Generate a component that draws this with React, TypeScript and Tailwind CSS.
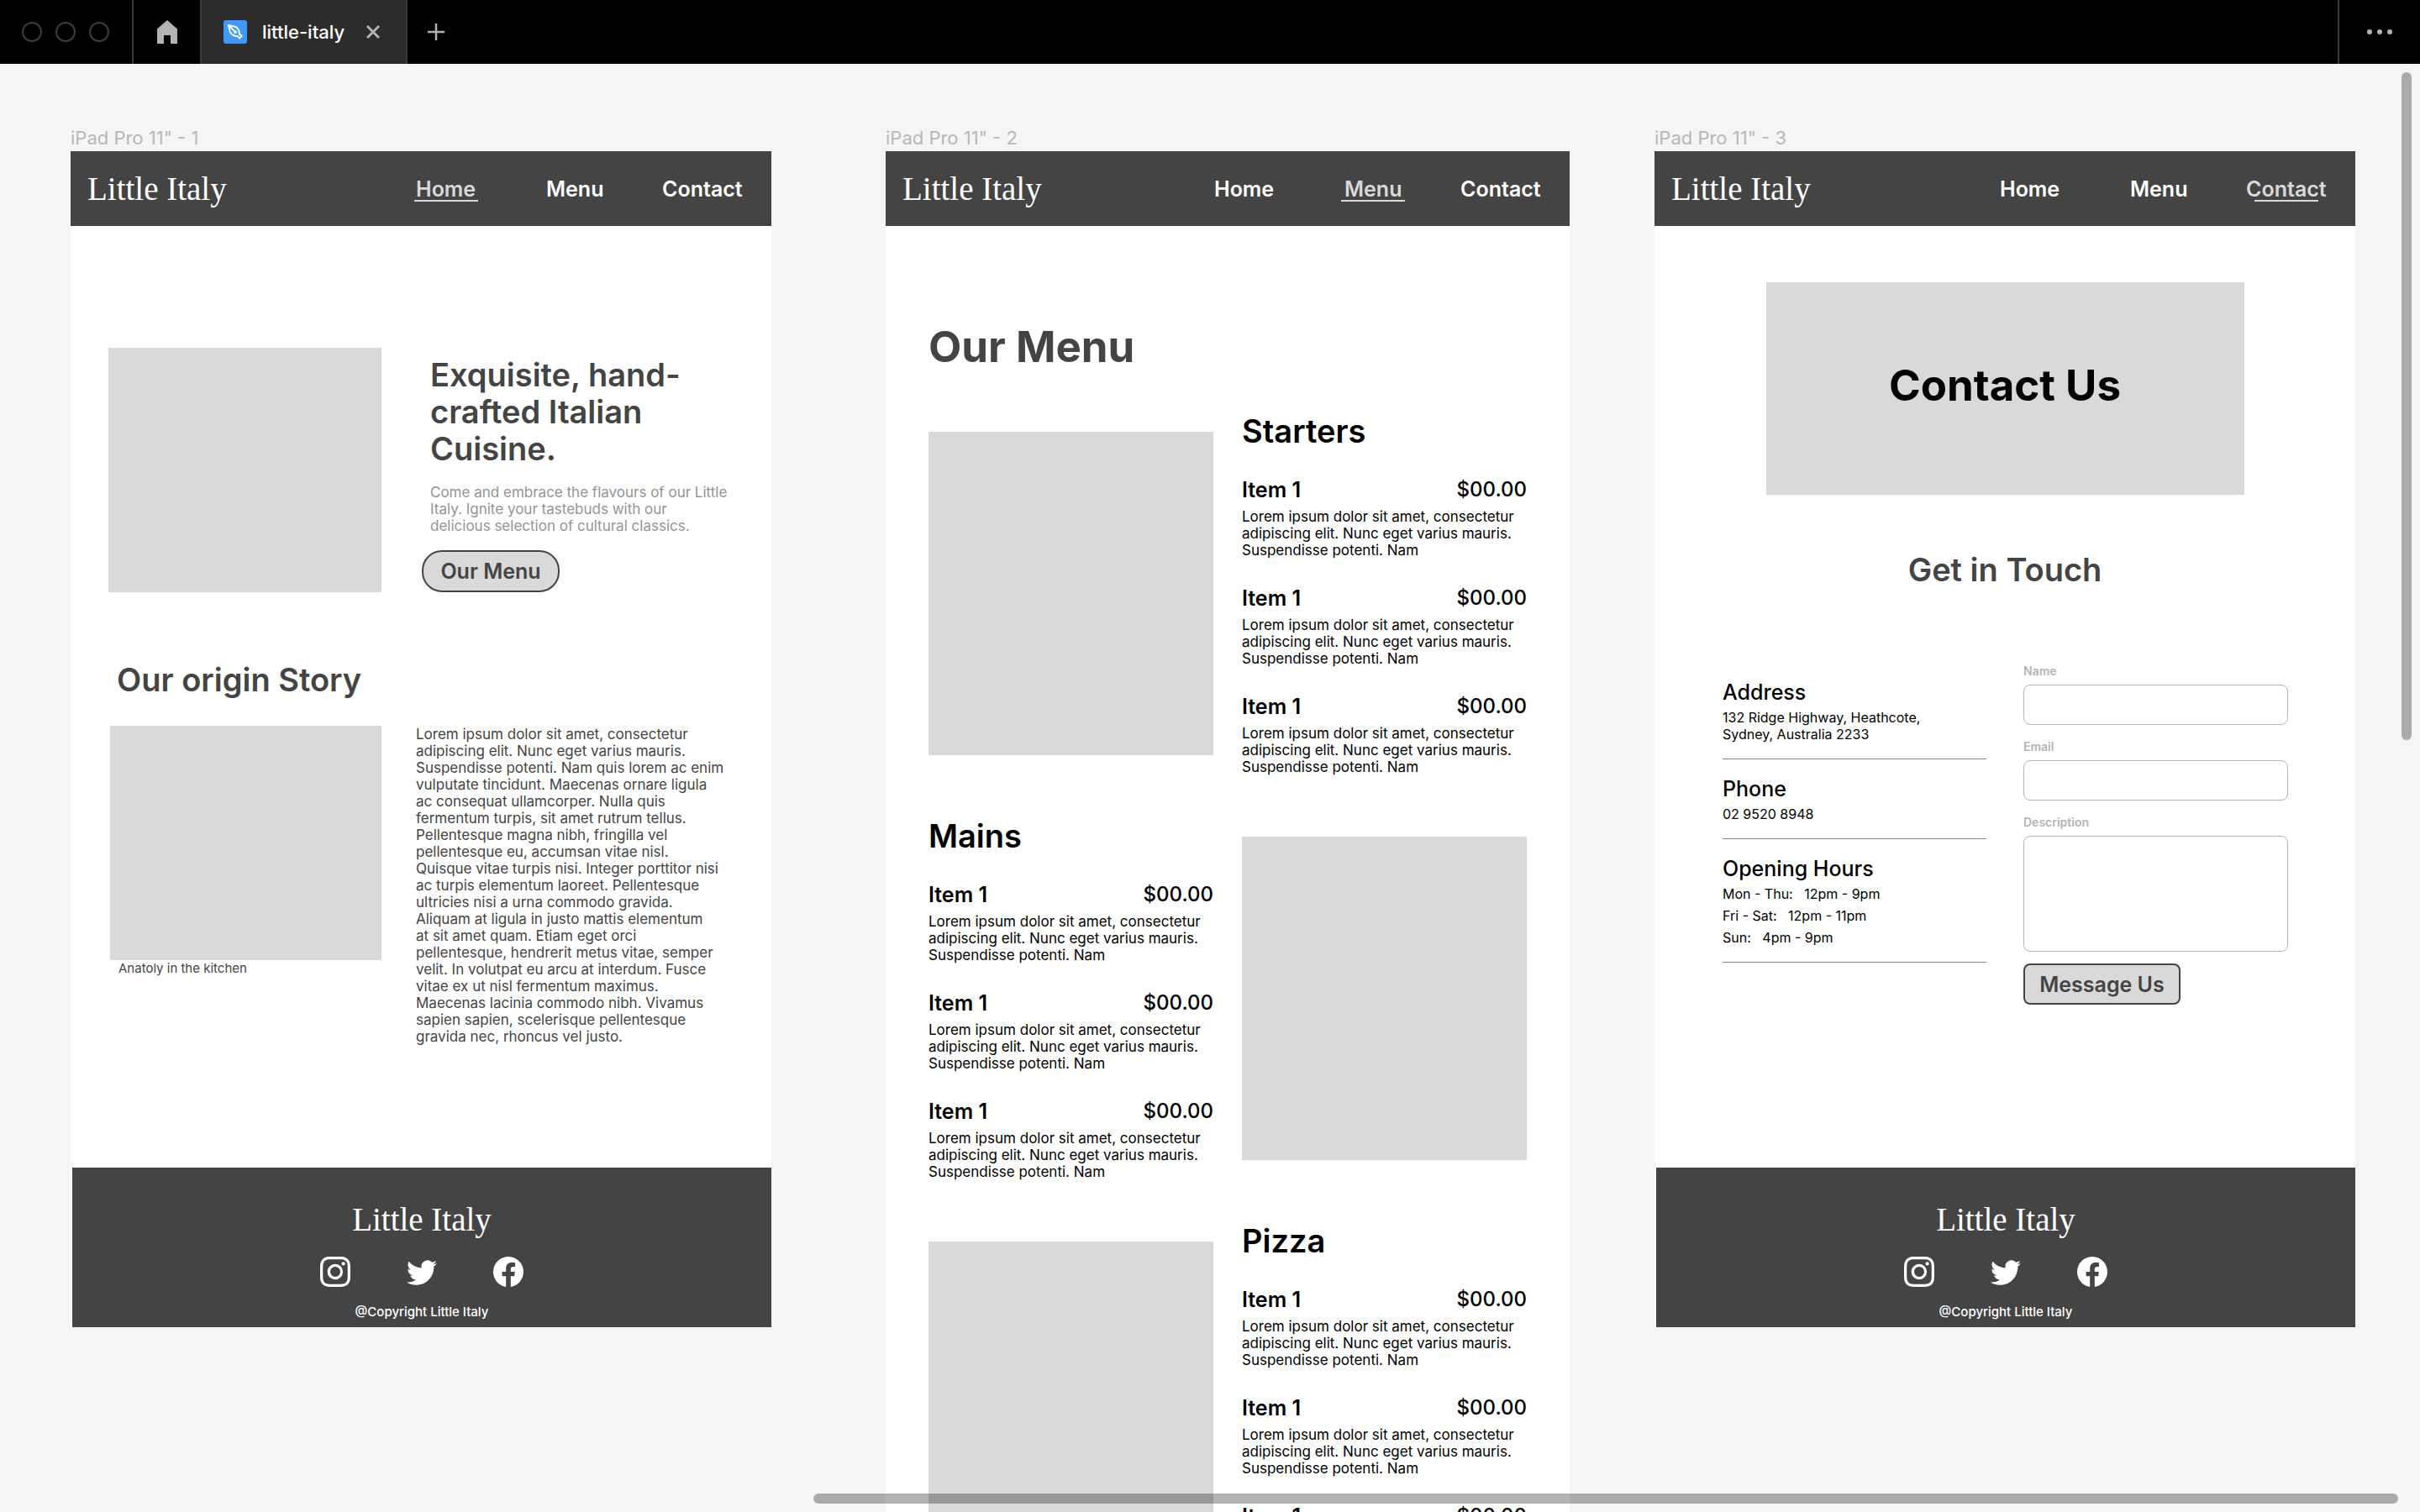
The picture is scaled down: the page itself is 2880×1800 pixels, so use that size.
import type { ReactNode } from "react";
import { BsFacebook, BsInstagram, BsTwitter } from "react-icons/bs";

type PageName = "Home" | "Menu" | "Contact";

const STORY = [
  "Lorem ipsum dolor sit amet, consectetur",
  "adipiscing elit. Nunc eget varius mauris.",
  "Suspendisse potenti. Nam quis lorem ac enim",
  "vulputate tincidunt. Maecenas ornare ligula",
  "ac consequat ullamcorper. Nulla quis",
  "fermentum turpis, sit amet rutrum tellus.",
  "Pellentesque magna nibh, fringilla vel",
  "pellentesque eu, accumsan vitae nisl.",
  "Quisque vitae turpis nisi. Integer porttitor nisi",
  "ac turpis elementum laoreet. Pellentesque",
  "ultricies nisi a urna commodo gravida.",
  "Aliquam at ligula in justo mattis elementum",
  "at sit amet quam. Etiam eget orci",
  "pellentesque, hendrerit metus vitae, semper",
  "velit. In volutpat eu arcu at interdum. Fusce",
  "vitae ex ut nisl fermentum maximus.",
  "Maecenas lacinia commodo nibh. Vivamus",
  "sapien sapien, scelerisque pellentesque",
  "gravida nec, rhoncus vel justo.",
];

const ITEM_TEXT = [
  "Lorem ipsum dolor sit amet, consectetur",
  "adipiscing elit. Nunc eget varius mauris.",
  "Suspendisse potenti. Nam",
];

function Lines({ lines }: { lines: string[] }) {
  return (
    <>
      {lines.map((line) => (
        <span key={line} className="block whitespace-nowrap">
          {line}
        </span>
      ))}
    </>
  );
}

function TopBar() {
  return (
    <header className="flex h-[76px] shrink-0 bg-black text-[#b3b3b3]">
      <div className="flex items-center gap-4 border-r-2 border-[#3a3a3a] pr-[27px] pl-[26px]">
        <span className="size-6 rounded-full border-2 border-[#3d3d3d]" />
        <span className="size-6 rounded-full border-2 border-[#3d3d3d]" />
        <span className="size-6 rounded-full border-2 border-[#3d3d3d]" />
      </div>
      <button aria-label="Home" className="flex w-[79px] items-center justify-center">
        <svg width="24" height="28" viewBox="0 0 24 28" fill="currentColor">
          <path d="M12 0 24 10.5V28h-8V18H8v10H0V10.5Z" />
        </svg>
      </button>
      <div className="flex items-center border-x-2 border-[#3a3a3a] bg-[#2c2c2c] pr-[30px] pl-[26px]">
        <svg width="28" height="28" viewBox="0 0 28 28" fill="none">
          <rect width="28" height="28" rx="3" fill="#4099f7" />
          <path
            d="M5.8 5.800 14.500 8C17.500 10 19 13 18.800 16.500L21.600 18.800 19 21.600 16.800 19C13.300 19.200 10 17.500 8 14.500ZM5.800 5.800 13 13"
            stroke="white"
            strokeWidth="1.900"
            strokeLinejoin="round"
          />
          <circle cx="14" cy="14" r="1.900" fill="white" />
        </svg>
        <span className="ml-[18px] text-[22px] leading-7 font-medium text-white">little-italy</span>
        <button aria-label="Close tab" className="ml-[25px]">
          <svg width="18" height="18" viewBox="0 0 18 18" stroke="currentColor" strokeWidth="3">
            <path d="m2 2 14 14M16 2 2 16" />
          </svg>
        </button>
      </div>
      <button aria-label="New tab" className="ml-6">
        <svg width="20" height="20" viewBox="0 0 20 20" stroke="currentColor" strokeWidth="2.500">
          <path d="M10 0v20M0 10h20" />
        </svg>
      </button>
      <button
        aria-label="More"
        className="ml-auto flex w-[98px] items-center justify-center gap-1.5 border-l-2 border-[#3a3a3a]"
      >
        <span className="size-1.5 rounded-full bg-[#b3b3b3]" />
        <span className="size-1.5 rounded-full bg-[#b3b3b3]" />
        <span className="size-1.5 rounded-full bg-[#b3b3b3]" />
      </button>
    </header>
  );
}

function Logo() {
  return <span className="font-['Liberation_Serif',serif] text-[39px] leading-[44px] text-white">Little Italy</span>;
}

function NavLink({ name, active }: { name: PageName; active: boolean }) {
  return (
    <a href="#" className={active ? "relative text-[#d9d9d9]" : "relative text-white"}>
      {name}
      {active && <span className="absolute top-7 left-1/2 h-0.5 w-[76px] -translate-x-1/2 bg-[#d9d9d9]" />}
    </a>
  );
}

function SiteHeader({ active }: { active: PageName }) {
  return (
    <div className="flex h-[89px] items-center justify-between bg-[#444] pr-8 pl-5">
      <Logo />
      <nav className="flex text-[25px] leading-[30px] font-semibold">
        <div className="w-[155px]">
          <NavLink name="Home" active={active === "Home"} />
        </div>
        <div className="w-[138px]">
          <NavLink name="Menu" active={active === "Menu"} />
        </div>
        <div className="w-[98px]">
          <NavLink name="Contact" active={active === "Contact"} />
        </div>
      </nav>
    </div>
  );
}

function SiteFooter() {
  return (
    <footer className="mt-auto ml-0.5 flex h-[190px] flex-col items-center bg-[#444] pt-10 text-white">
      <Logo />
      <div className="mt-[22px] flex gap-[67px]">
        <a href="#" aria-label="Instagram">
          <BsInstagram className="size-9" />
        </a>
        <a href="#" aria-label="Twitter">
          <BsTwitter className="size-9" />
        </a>
        <a href="#" aria-label="Facebook">
          <BsFacebook className="size-9" />
        </a>
      </div>
      <p className="mt-5 text-[15px] leading-5 font-medium">@Copyright Little Italy</p>
    </footer>
  );
}

function Artboard({
  label,
  className,
  children,
}: {
  label: string;
  className: string;
  children: ReactNode;
}) {
  return (
    <section className={className}>
      <h2 className="h-[30px] text-[22px] leading-7 whitespace-nowrap text-[#b8b8b8]">{label}</h2>
      {children}
    </section>
  );
}

function HomePage() {
  return (
    <div className="flex h-[1400px] flex-col bg-white text-[#444]">
      <SiteHeader active="Home" />
      <div className="mt-[145px] flex pl-[45px]">
        <div className="h-[291px] w-[325px] bg-[#d9d9d9]" />
        <div className="ml-12 pt-[10px]">
          <h1 className="pl-[10px] text-[38px] leading-[44px] font-semibold">
            <Lines lines={["Exquisite, hand-", "crafted Italian", "Cuisine."]} />
          </h1>
          <p className="mt-5 pl-[10px] text-[17px] leading-5 text-[#949494]">
            <Lines
              lines={[
                "Come and embrace the flavours of our Little",
                "Italy. Ignite your tastebuds with our",
                "delicious selection of cultural classics.",
              ]}
            />
          </p>
          <button className="mt-[19px] h-[50px] w-[164px] rounded-3xl border-2 border-[#444] bg-[#d9d9d9] text-[25px] leading-[30px] font-semibold">
            Our Menu
          </button>
        </div>
      </div>
      <h2 className="mt-[82px] pl-[55px] text-[38px] leading-[44px] font-semibold">Our origin Story</h2>
      <div className="mt-[33px] flex pl-[47px]">
        <figure>
          <div className="h-[279px] w-[323px] bg-[#d9d9d9]" />
          <figcaption className="pl-[10px] text-[15px] leading-5">Anatoly in the kitchen</figcaption>
        </figure>
        <p className="ml-[41px] text-[17px] leading-5">
          <Lines lines={STORY} />
        </p>
      </div>
      <SiteFooter />
    </div>
  );
}

function MenuSection({ title, imageFirst }: { title: string; imageFirst: boolean }) {
  return (
    <div className="grid grid-cols-2 gap-x-[34px]">
      <div className={imageFirst ? "mt-[23px] h-[385px] bg-[#d9d9d9]" : "order-last mt-[23px] h-[385px] bg-[#d9d9d9]"} />
      <div>
        <h3 className="text-[38px] leading-[44px] font-semibold">{title}</h3>
        <ul className="mt-[33px] flex flex-col gap-8">
          {[1, 2, 3].map((row) => (
            <li key={row}>
              <div className="flex justify-between leading-[30px]">
                <span className="text-[25px] font-semibold">Item 1</span>
                <span className="text-[24px] font-medium">$00.00</span>
              </div>
              <p className="mt-[7px] text-[17px] leading-5">
                <Lines lines={ITEM_TEXT} />
              </p>
            </li>
          ))}
        </ul>
      </div>
    </div>
  );
}

function MenuPage() {
  return (
    <div className="bg-white pb-24 text-black">
      <SiteHeader active="Menu" />
      <div className="px-[51px]">
        <h1 className="mt-[115px] text-[51px] leading-[58px] font-bold text-[#444]">Our Menu</h1>
        <div className="mt-[49px] flex flex-col gap-[50px]">
          <MenuSection title="Starters" imageFirst />
          <MenuSection title="Mains" imageFirst={false} />
          <MenuSection title="Pizza" imageFirst />
        </div>
      </div>
    </div>
  );
}

function Detail({ title, children }: { title: string; children: ReactNode }) {
  return (
    <div className="border-b border-[#858585] pb-[19px]">
      <h3 className="text-[25px] leading-[30px] font-medium">{title}</h3>
      <div className="mt-[5px] text-[16px] leading-5">{children}</div>
    </div>
  );
}

function ContactPage() {
  return (
    <div className="flex h-[1400px] flex-col bg-white text-black">
      <SiteHeader active="Contact" />
      <div className="mx-auto mt-[67px] flex h-[253px] w-[569px] items-center justify-center bg-[#d9d9d9] pb-2">
        <h1 className="text-[51px] leading-[58px] font-bold">Contact Us</h1>
      </div>
      <h2 className="mt-[67px] text-center text-[38px] leading-[44px] font-semibold text-[#444]">Get in Touch</h2>
      <div className="mt-[91px] grid grid-cols-[314px_315px] gap-x-11 pl-[81px]">
        <div className="mt-[18px] flex flex-col gap-5">
          <Detail title="Address">
            <Lines lines={["132 Ridge Highway, Heathcote,", "Sydney, Australia 2233"]} />
          </Detail>
          <Detail title="Phone">02 9520 8948</Detail>
          <Detail title="Opening Hours">
            <div className="flex flex-col gap-1.5 whitespace-pre">
              <span>{"Mon - Thu:   12pm - 9pm"}</span>
              <span>{"Fri - Sat:   12pm - 11pm"}</span>
              <span>{"Sun:   4pm - 9pm"}</span>
            </div>
          </Detail>
        </div>
        <form className="flex flex-col items-start text-[14px] leading-4 font-semibold text-[#b3b3b8]">
          <label htmlFor="name">Name</label>
          <input id="name" type="text" className="mt-2 h-12 w-full rounded-lg border border-[#b3b3b8] px-3" />
          <label htmlFor="email" className="mt-[18px]">
            Email
          </label>
          <input id="email" type="email" className="mt-2 h-12 w-full rounded-lg border border-[#b3b3b8] px-3" />
          <label htmlFor="description" className="mt-[18px]">
            Description
          </label>
          <textarea
            id="description"
            className="mt-2 h-[138px] w-full resize-none rounded-lg border border-[#b3b3b8] p-3"
          />
          <button
            type="button"
            className="mt-[14px] h-[49px] w-[187px] rounded-lg border-2 border-[#444] bg-[#d9d9d9] text-[25px] leading-[30px] font-semibold text-[#444]"
          >
            Message Us
          </button>
        </form>
      </div>
      <SiteFooter />
    </div>
  );
}

export default function App() {
  return (
    <div className="flex h-screen flex-col overflow-hidden bg-[#f5f5f5] font-['Inter',sans-serif]">
      <TopBar />
      <main className="relative flex min-h-0 flex-1 items-start overflow-hidden pt-[74px] pl-[84px]">
        <Artboard label={'iPad Pro 11" - 1'} className="w-[834px] shrink-0">
          <HomePage />
        </Artboard>
        <Artboard label={'iPad Pro 11" - 2'} className="ml-[136px] w-[814px] shrink-0">
          <MenuPage />
        </Artboard>
        <Artboard label={'iPad Pro 11" - 3'} className="ml-[101px] w-[834px] shrink-0">
          <ContactPage />
        </Artboard>
        <div className="absolute top-[10px] right-[10px] h-[795px] w-3 rounded-full bg-black/30" />
        <div className="absolute right-[26px] bottom-[10px] left-[968px] h-3 rounded-full bg-black/30" />
      </main>
    </div>
  );
}
